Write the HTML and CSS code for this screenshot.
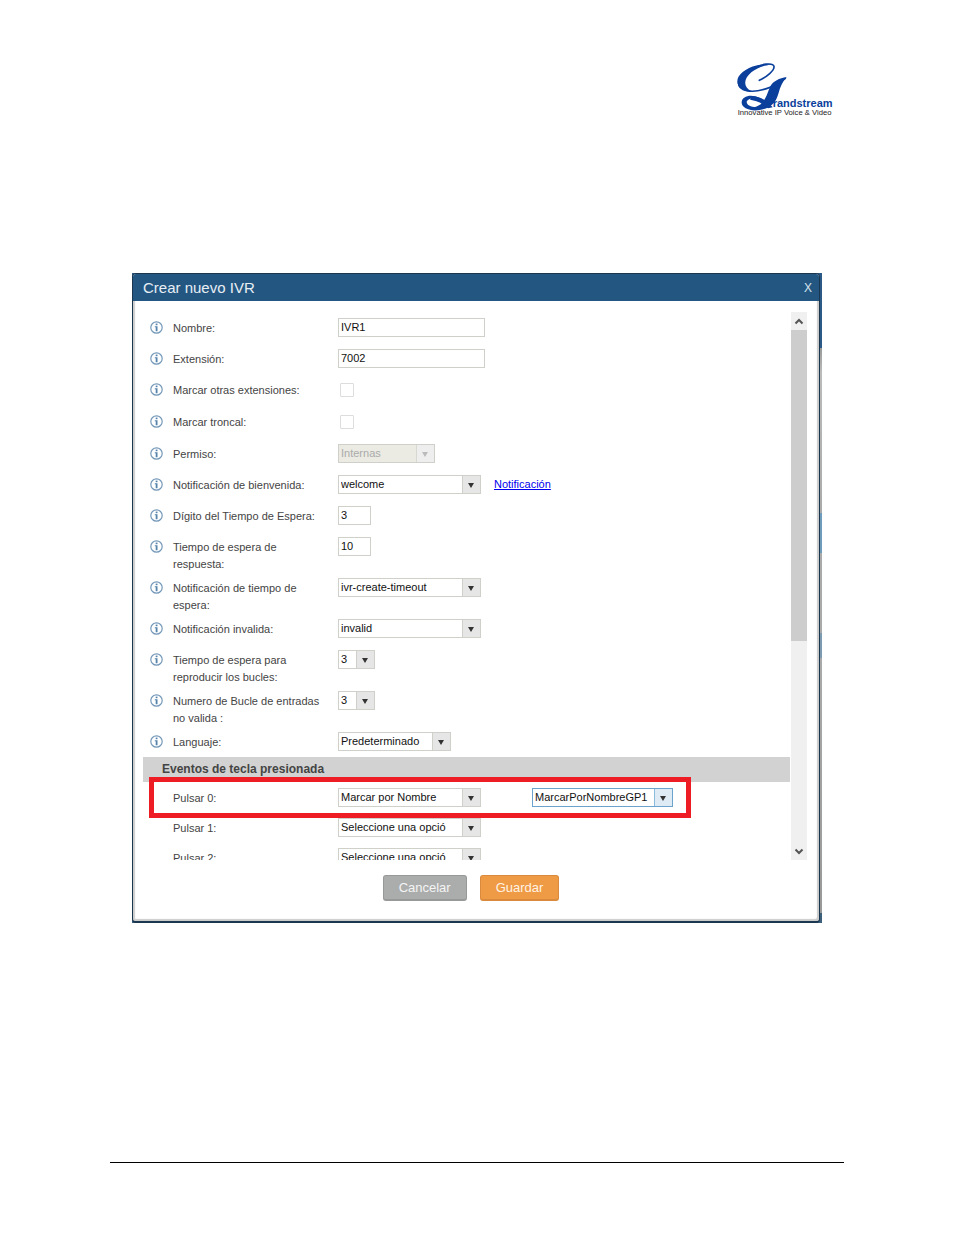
FILE: index.html
```
<!DOCTYPE html>
<html lang="es">
<head>
    <meta charset="UTF-8">
    <meta name="viewport" content="width=device-width, initial-scale=1.0">
    <title>Crear nuevo IVR</title>
    <link rel="stylesheet" href="styles.css">
</head>
<body>
    <svg class="sprite" width="0" height="0" aria-hidden="true">
        <symbol id="info" viewBox="0 0 13 13">
            <circle cx="6.5" cy="6.5" r="5.7" fill="#fff" stroke="#7599b9" stroke-width="1.2"/>
            <rect x="5.7" y="2.6" width="1.8" height="1.6" fill="#5583ab"/>
            <path d="M4.8 5.2h2.7v5h-1.8V6.2h-.9z" fill="#5583ab"/>
        </symbol>
    </svg>

    <header class="page-header">
        <svg class="logo" viewBox="0 0 360 210" role="img" aria-label="Grandstream">
            <g fill="none" stroke="#0b3f9c" stroke-linecap="round">
                <path d="M106 76C128 66 152 46 150 34C147 22 112 26 84 42" stroke-width="5"/>
                <path d="M184 70C150 98 100 114 68 107C34 99 36 68 72 48" stroke-width="5"/>
            </g>
            <g fill="#0b3f9c">
                <path d="M148 31C118 20 60 36 43 66C32 91 52 110 82 109C58 97 57 73 82 52C103 35 132 28 148 31z"/>
                <path d="M188 67C166 69 147 79 139 94C128 118 124 146 96 155C84 158 70 152 68 142C68 132 84 128 107 129C80 116 55 124 53 141C51 159 79 170 107 165C147 158 157 137 164 113C168 98 175 80 188 67z"/>
                <path d="M84 124C112 124 128 138 146 157L132 160C118 148 106 138 78 134z"/>
            </g>
            <text class="logo-name" x="146" y="157">randstream</text>
            <text class="logo-tagline" x="41" y="180">Innovative IP Voice &amp; Video</text>
        </svg>
    </header>

    <main class="backdrop">
        <form class="dialog">
            <div class="dialog-title">
                <h1>Crear nuevo IVR</h1>
                <button type="button" class="close" aria-label="Cerrar">X</button>
            </div>

            <div class="dialog-body">
                <div class="fields">
                    <div class="row">
                        <svg class="info"><use href="#info"/></svg>
                        <label for="nombre">Nombre:</label>
                        <input type="text" id="nombre" value="IVR1">
                    </div>
                    <div class="row">
                        <svg class="info"><use href="#info"/></svg>
                        <label for="extension">Extensión:</label>
                        <input type="text" id="extension" value="7002">
                    </div>
                    <div class="row row-check">
                        <svg class="info"><use href="#info"/></svg>
                        <label for="otras">Marcar otras extensiones:</label>
                        <input type="checkbox" id="otras">
                    </div>
                    <div class="row row-check">
                        <svg class="info"><use href="#info"/></svg>
                        <label for="troncal">Marcar troncal:</label>
                        <input type="checkbox" id="troncal">
                    </div>
                    <div class="row">
                        <svg class="info"><use href="#info"/></svg>
                        <label for="permiso">Permiso:</label>
                        <select id="permiso" class="select-permit" disabled><option>Internas</option></select>
                    </div>
                    <div class="row">
                        <svg class="info"><use href="#info"/></svg>
                        <label for="bienvenida">Notificación de bienvenida:</label>
                        <select id="bienvenida"><option>welcome</option></select>
                        <a href="#" class="prompt-link">Notificación</a>
                    </div>
                    <div class="row">
                        <svg class="info"><use href="#info"/></svg>
                        <label for="digito">Dígito del Tiempo de Espera:</label>
                        <input type="text" id="digito" class="short" value="3">
                    </div>
                    <div class="row">
                        <svg class="info"><use href="#info"/></svg>
                        <label for="respuesta">Tiempo de espera de respuesta:</label>
                        <input type="text" id="respuesta" class="short" value="10">
                    </div>
                    <div class="row">
                        <svg class="info"><use href="#info"/></svg>
                        <label for="timeout">Notificación de tiempo de espera:</label>
                        <select id="timeout"><option>ivr-create-timeout</option></select>
                    </div>
                    <div class="row">
                        <svg class="info"><use href="#info"/></svg>
                        <label for="invalida">Notificación invalida:</label>
                        <select id="invalida"><option>invalid</option></select>
                    </div>
                    <div class="row">
                        <svg class="info"><use href="#info"/></svg>
                        <label for="bucles">Tiempo de espera para reproducir los bucles:</label>
                        <select id="bucles" class="select-number"><option>3</option></select>
                    </div>
                    <div class="row">
                        <svg class="info"><use href="#info"/></svg>
                        <label for="entradas">Numero de Bucle de entradas no valida :</label>
                        <select id="entradas" class="select-number"><option>3</option></select>
                    </div>
                    <div class="row">
                        <svg class="info"><use href="#info"/></svg>
                        <label for="lenguaje">Languaje:</label>
                        <select id="lenguaje" class="select-language"><option>Predeterminado</option></select>
                    </div>

                    <h2>Eventos de tecla presionada</h2>

                    <div class="row row-key highlight">
                        <label for="pulsar0">Pulsar 0:</label>
                        <select id="pulsar0"><option>Marcar por Nombre</option></select>
                        <select class="select-target" aria-label="Destino de Pulsar 0"><option>MarcarPorNombreGP1</option></select>
                    </div>
                    <div class="row row-key">
                        <label for="pulsar1">Pulsar 1:</label>
                        <select id="pulsar1"><option>Seleccione una opció</option></select>
                    </div>
                    <div class="row row-key">
                        <label for="pulsar2">Pulsar 2:</label>
                        <select id="pulsar2"><option>Seleccione una opció</option></select>
                    </div>
                </div>

                <div class="scrollbar">
                    <svg class="scroll-arrow" viewBox="0 0 16 18"><path d="M4.5 11.5L8 8l3.5 3.5"/></svg>
                    <div class="thumb"></div>
                    <svg class="scroll-arrow scroll-down" viewBox="0 0 16 18"><path d="M4.5 7.5L8 11l3.5-3.5"/></svg>
                </div>
            </div>

            <div class="actions">
                <button type="button" class="btn">Cancelar</button>
                <button type="submit" class="btn btn-save">Guardar</button>
            </div>
        </form>
    </main>

    <footer class="page-footer"></footer>
</body>
</html>
```

FILE: styles.css
```
* {
    box-sizing: border-box;
}
body {
    display: flex;
    flex-direction: column;
    min-height: 100vh;
    margin: 0;
    padding: 55px 110px 72px;
    background: #fff;
    color: #444;
    font-family: "Liberation Sans", Arial, sans-serif;
    font-size: 11px;
}
.sprite {
    position: absolute;
}

.page-header {
    display: flex;
    justify-content: flex-end;
    height: 218px;
}
.logo {
    width: 120px;
    height: 70px;
}
.logo-name {
    fill: #0b3f9c;
    font-size: 33px;
    font-weight: bold;
}
.logo-tagline {
    fill: #222;
    font-size: 23px;
}

/* the page behind the dialog shows as a thin strip on the right */
.backdrop {
    margin: 0 22px;
    padding-right: 2px;
    background: linear-gradient(#2a5a85 75px, #999 75px, #bbb 100px, #aaa 240px, #6f9cba 240px, #6f9cba 280px, #aaa 280px, #aaa 360px, #7d9bb0 360px, #7d9bb0 385px, #aaa 385px, #999 640px, #3c5f7c 640px);
}
.dialog {
    border: 1px solid #1b364f;
    border-bottom-width: 2px;
    border-radius: 4px;
    background: #fff;
    box-shadow: inset -2px -2px 1px #ccc, inset 2px 0 1px #ccc;
}
.dialog-title {
    display: flex;
    align-items: center;
    justify-content: space-between;
    height: 27px;
    padding: 0 5px 0 10px;
    background: #235782;
    color: #e8eef4;
    border-radius: 3px 3px 0 0;
}
h1 {
    margin: 0;
    font-size: 15px;
    font-weight: normal;
}
.close {
    padding: 0 2px;
    border: 0;
    background: none;
    color: #d5e2ec;
    font-family: inherit;
    font-size: 12px;
    cursor: pointer;
}

.dialog-body {
    display: flex;
    gap: 1px;
    height: 559px;
    padding: 11px 12px 0 10px;
}
.fields {
    flex: 1;
    overflow: hidden;
}
.row {
    display: flex;
    align-items: flex-start;
    min-height: 31px;
    padding: 6px 0 0 7px;
}
.row-check {
    min-height: 32px;
}
.row-key {
    position: relative;
    min-height: 30px;
    padding-left: 30px;
}
.info {
    width: 13px;
    height: 13px;
    margin: 3px 10px 0 0;
}
label {
    width: 155px;
    margin: 0 10px -1px 0;
    padding-top: 2px;
    line-height: 17px;
}

input,
select {
    height: 19px;
    margin: 0;
    padding: 0 2px 2px;
    border: 1px solid #d0d0cb;
    border-radius: 0;
    background-color: #fff;
    color: #111;
    font-family: inherit;
    font-size: 11px;
}
input[type="text"] {
    width: 147px;
}
input[type="text"].short {
    width: 33px;
}
input[type="checkbox"] {
    appearance: none;
    width: 14px;
    height: 14px;
    margin: 3px 0 0 2px;
    border-color: #ddd;
    border-radius: 1px;
}
select {
    appearance: none;
    width: 143px;
    padding-right: 18px;
    background-image: url("data:image/svg+xml,%3Csvg xmlns='http://www.w3.org/2000/svg' width='18' height='17'%3E%3Cpath d='M0 0h18v17H0z' fill='%23e6e6e6'/%3E%3Cpath d='M0 0h1v17H0z' fill='%23d0d0cb'/%3E%3Cpath d='M6 7h6l-3 5z' fill='%23333'/%3E%3C/svg%3E");
    background-repeat: no-repeat;
    background-position: right top;
}
select:disabled {
    background-color: #ebebe4;
    background-image: url("data:image/svg+xml,%3Csvg xmlns='http://www.w3.org/2000/svg' width='18' height='17'%3E%3Cpath d='M0 0h18v17H0z' fill='%23eee'/%3E%3Cpath d='M0 0h1v17H0z' fill='%23d8d8d3'/%3E%3Cpath d='M6 7h6l-3 5z' fill='%23bbb'/%3E%3C/svg%3E");
    color: #aaa;
    opacity: 1;
}
.select-permit {
    width: 97px;
}
.select-number {
    width: 37px;
}
.select-language {
    width: 113px;
}
.select-target {
    width: 141px;
    margin-left: 51px;
    padding-right: 0;
    border-color: #6ba3cc;
    background-image: url("data:image/svg+xml,%3Csvg xmlns='http://www.w3.org/2000/svg' width='18' height='17'%3E%3Cpath d='M0 0h18v17H0z' fill='%23deebf5'/%3E%3Cpath d='M0 0h1v17H0z' fill='%238dbbdc'/%3E%3Cpath d='M6 7h6l-3 5z' fill='%23333'/%3E%3C/svg%3E");
}
.prompt-link {
    margin-left: 13px;
    color: #00e;
    line-height: 19px;
}

h2 {
    margin: 0;
    padding-left: 19px;
    background: #d2d2d2;
    color: #444;
    font-size: 12px;
    line-height: 25px;
}
.highlight::after {
    content: "";
    position: absolute;
    box-sizing: border-box;
    top: -5px;
    left: 6px;
    width: 542px;
    height: 41px;
    border: 5px solid #ee1c25;
    pointer-events: none;
}

.scrollbar {
    display: flex;
    flex-direction: column;
    width: 16px;
    background: #f0f0f0;
}
.scroll-arrow {
    width: 16px;
    height: 18px;
    fill: none;
    stroke: #555;
    stroke-width: 2;
}
.scroll-down {
    margin-top: auto;
}
.thumb {
    height: 311px;
    background: #cdcdcd;
}

.actions {
    display: flex;
    justify-content: center;
    gap: 13px;
    padding: 15px 10px 20px 0;
}
.btn {
    height: 26px;
    padding: 0 15px;
    border: 1px solid #979998;
    border-bottom-width: 2px;
    border-radius: 3px;
    background: #abadac;
    color: #f4f4f4;
    font-family: inherit;
    font-size: 13px;
    cursor: pointer;
}
.btn-save {
    border-color: #d98a3c;
    background: #ef9a45;
    color: #fff3e4;
}

.page-footer {
    margin-top: auto;
    border-top: 1px solid #000;
}
```
